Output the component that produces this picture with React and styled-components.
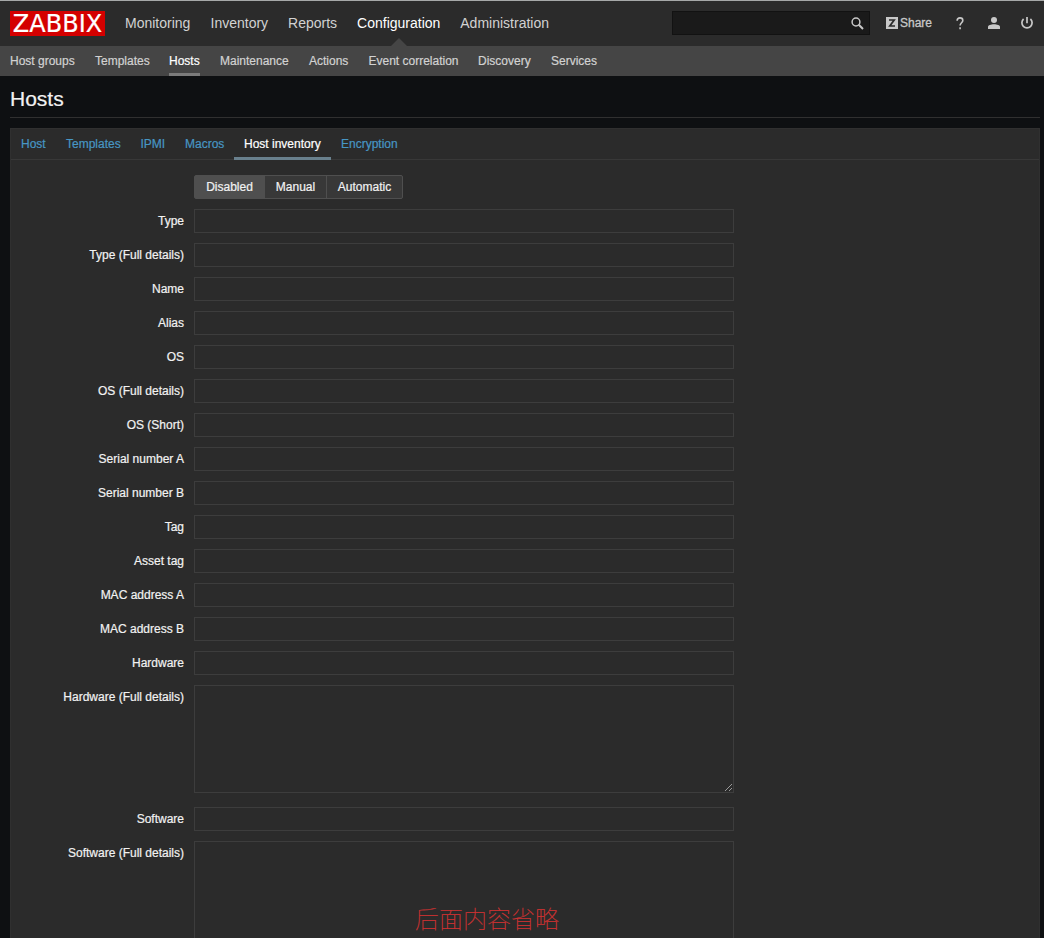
import React from 'react';
import styled, { createGlobalStyle } from 'styled-components';

const GlobalStyle = createGlobalStyle`
  * { box-sizing: border-box; }
  html, body { margin: 0; background: #0e1012; overflow: hidden; }
  body {
    font: 12px/16px "Liberation Sans", Arial, sans-serif;
    color: #f2f2f2;
    -webkit-text-stroke-width: 0.2px;
  }
`;
const Page = styled.div`
  height: 938px;
  overflow: hidden;
  border-top: 1px solid #a6a8a8;
`;
const Header = styled.header`
  display: flex;
  align-items: center;
  height: 45px;
  padding: 0 10px 1px;
  background: #2b2b2b;
`;
const Logo = styled.div`
  width: 95px;
  height: 25px;
  margin: 1px 20px 0 0;
  background: #d40000;
  color: #fff;
  font: 24px/26px "DejaVu Sans", sans-serif;
  text-align: center;
`;
const MainNav = styled.nav`
  display: flex;
  align-self: flex-start;
  gap: 20px;
  flex: 1;
  height: 45px;
  -webkit-text-stroke-width: 0;
`;
const MainItem = styled.a`
  position: relative;
  font-size: 14px;
  line-height: 45px;
  width: ${(p) => p.$w}px;
  white-space: nowrap;
  color: ${(p) => (p.$active ? '#fff' : '#d2d2d2')};
  &::after {
    content: '';
    display: ${(p) => (p.$active ? 'block' : 'none')};
    position: absolute;
    bottom: 0;
    left: 50%;
    margin-left: -8px;
    border: 8px solid transparent;
    border-top: 0;
    border-bottom-color: #454545;
  }
`;
const Search = styled.div`
  display: flex;
  align-items: center;
  justify-content: flex-end;
  width: 198px;
  height: 24px;
  padding-right: 5px;
  border: 1px solid #121212;
  background: #1a1a1a;
`;
const Share = styled.a`
  display: flex;
  align-items: center;
  gap: 2px;
  width: 47px;
  margin-left: 16px;
  line-height: 14px;
  color: #c8c8c8;
  -webkit-text-stroke-width: 0.3px;
`;
const Tool = styled.a`
  display: flex;
  justify-content: center;
  width: 14px;
  margin-left: ${(p) => p.$gap}px;
`;
const SubNav = styled.nav`
  display: flex;
  gap: 20px;
  height: 30px;
  padding: 0 10px;
  background: #454545;
`;
const SubItem = styled.a`
  height: 30px;
  line-height: 30px;
  white-space: nowrap;
  width: ${(p) => p.$w}px;
  color: ${(p) => (p.$active ? '#fff' : '#d2d2d2')};
  border-bottom: ${(p) => (p.$active ? '3px solid #7b7b7b' : '0')};
`;
const Content = styled.main`
  padding: 0 4px 0 10px;
`;
const Title = styled.h1`
  height: 42px;
  margin: 0 0 10px;
  font-size: 21px;
  line-height: 46px;
  font-weight: 400;
  border-bottom: 1px solid #303030;
`;
const Panel = styled.section`
  height: 830px;
  background: #2b2b2b;
  border: 1px solid #303030;
`;
const Tabs = styled.div`
  display: flex;
  height: 31px;
  border-bottom: 1px solid #383838;
`;
const Tab = styled.a`
  height: 31px;
  padding: 0 10px;
  line-height: 30px;
  white-space: nowrap;
  width: ${(p) => p.$w}px;
  color: ${(p) => (p.$active ? '#fff' : '#4796c4')};
  border-bottom: ${(p) => (p.$active ? '3px solid #69808d' : '0')};
`;
const Form = styled.form`
  display: flex;
  flex-direction: column;
  gap: 10px;
  padding-top: 15px;
`;
const Row = styled.div`
  display: flex;
  gap: 10px;
  margin-bottom: ${(p) => (p.$area ? 4 : 0)}px;
`;
const Label = styled.label`
  width: 173px;
  height: 24px;
  line-height: 24px;
  text-align: right;
  color: #f2f2f2;
`;
const Input = styled.input`
  width: 540px;
  height: 24px;
  border: 1px solid #3d3d3d;
  background: #2b2b2b;
  outline: 0;
`;
const Area = styled.div`
  display: flex;
  align-items: flex-end;
  justify-content: flex-end;
  width: 540px;
  height: 108px;
  padding: 0 1px 1px 0;
  border: 1px solid #3d3d3d;
`;
const Segments = styled.div`
  display: flex;
  width: 209px;
  height: 24px;
  border: 1px solid #4f4f4f;
  border-radius: 2px;
  background: #383838;
`;
const Segment = styled.span`
  width: ${(p) => p.$w}px;
  line-height: 22px;
  text-align: center;
  color: #f2f2f2;
  background: ${(p) => (p.$active ? '#4f4f4f' : 'transparent')};
  & + & { border-left: 1px solid #4f4f4f; }
`;
const Note = styled.div`
  position: absolute;
  left: 415px;
  top: 900px;
  color: #d03232;
  font: 100 24px/36px "Noto Sans CJK SC", sans-serif;
  white-space: nowrap;
`;

const mainItems = [['Monitoring', 65.5], ['Inventory', 57.6], ['Reports', 49], ['Configuration', 83.2], ['Administration', 89]];
const subItems = [['Host groups', 65], ['Templates', 54], ['Hosts', 31], ['Maintenance', 69], ['Actions', 39.5], ['Event correlation', 89.5], ['Discovery', 53], ['Services', 46]];
const tabs = [['Host', 45], ['Templates', 74.5], ['IPMI', 44.5], ['Macros', 59], ['Host inventory', 97], ['Encryption', 77]];
const fields = ['Type', 'Type (Full details)', 'Name', 'Alias', 'OS', 'OS (Full details)', 'OS (Short)', 'Serial number A', 'Serial number B', 'Tag', 'Asset tag', 'MAC address A', 'MAC address B', 'Hardware', 'Hardware (Full details)', 'Software', 'Software (Full details)'];

const SearchIcon = () => (
  <svg width="13" height="13" viewBox="0 0 13 13" fill="none" stroke="#c8c8c8">
    <circle cx="5" cy="5" r="3.9" strokeWidth="1.5" />
    <path d="M7.8 7.8 12 12" strokeWidth="2" />
  </svg>
);
const ZIcon = () => (
  <svg width="12" height="12" viewBox="0 0 12 12">
    <path fill="#c8c8c8" d="M0 0h12v12H0z" />
    <path fill="none" stroke="#2b2b2b" strokeWidth="1.7" d="M3 3h5.2L3.8 9H9" />
  </svg>
);
const HelpIcon = () => (
  <svg width="8" height="13" viewBox="0 0 8 13" fill="none" stroke="#c8c8c8" strokeWidth="1.6">
    <path d="M1.1 3.7C1.2 1.9 2.2.9 4 .9s2.8 1 2.8 2.5c0 2.2-2.7 2.5-2.7 5.1M4.1 10.3v2" />
  </svg>
);
const UserIcon = () => (
  <svg width="12" height="12" viewBox="0 0 12 12" fill="#c8c8c8">
    <circle cx="6" cy="3" r="3" />
    <path d="M0 12v-2c0-1.8 3-2.7 6-2.7s6 .9 6 2.7v2z" />
  </svg>
);
const PowerIcon = () => (
  <svg width="12" height="12" viewBox="0 0 12 12" fill="none" stroke="#c8c8c8" strokeWidth="1.7">
    <path d="M2.6 2a5.1 5.1 0 1 0 6.8 0M6 0v6.2" />
  </svg>
);
const Grip = () => (
  <svg width="8" height="8" viewBox="0 0 8 8" stroke="#b8b8b8" strokeWidth=".8">
    <path d="M1 8 8 1M5 8 8 5" />
  </svg>
);

export default function App() {
  return (
    <Page>
      <GlobalStyle />
      <Header>
        <Logo>ZABBIX</Logo>
        <MainNav>
          {mainItems.map(([t, w]) => <MainItem key={t} $w={w} $active={t === 'Configuration'}>{t}</MainItem>)}
        </MainNav>
        <Search><SearchIcon /></Search>
        <Share><ZIcon />Share</Share>
        <Tool $gap={20}><HelpIcon /></Tool>
        <Tool $gap={20}><UserIcon /></Tool>
        <Tool $gap={19}><PowerIcon /></Tool>
      </Header>
      <SubNav>
        {subItems.map(([t, w]) => <SubItem key={t} $w={w} $active={t === 'Hosts'}>{t}</SubItem>)}
      </SubNav>
      <Content>
        <Title>Hosts</Title>
        <Panel>
          <Tabs>
            {tabs.map(([t, w]) => <Tab key={t} $w={w} $active={t === 'Host inventory'}>{t}</Tab>)}
          </Tabs>
          <Form>
            <Row>
              <Label />
              <Segments>
                <Segment $w={69} $active>Disabled</Segment>
                <Segment $w={62}>Manual</Segment>
                <Segment $w={76}>Automatic</Segment>
              </Segments>
            </Row>
            {fields.map((name) => {
              const area = /ware \(/.test(name);
              return (
                <Row key={name} $area={area}>
                  <Label>{name}</Label>
                  {area ? <Area><Grip /></Area> : <Input />}
                </Row>
              );
            })}
          </Form>
        </Panel>
      </Content>
      <Note>后面内容省略</Note>
    </Page>
  );
}
